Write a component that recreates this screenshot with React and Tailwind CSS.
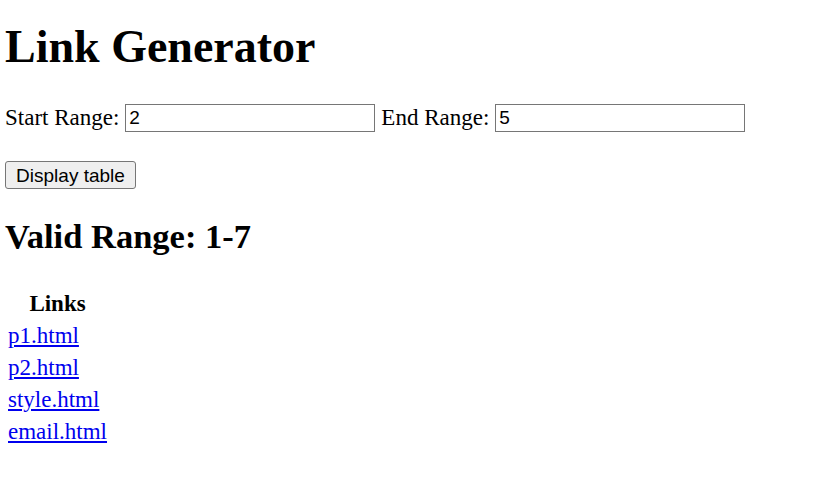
export default function App() {
  const links = ["p1.html", "p2.html", "style.html", "email.html"];

  return (
    <div className="min-h-[487px] bg-white px-[5px] pt-px font-['Liberation_Serif',serif] text-[23px] leading-[1.15] text-black">
      <h1 className="mt-[19px] text-[46px] font-bold leading-[53px]">Link Generator</h1>

      <div className="mt-[31px] flex items-center h-[28px]">
        <label>Start Range:</label>
        <input
          readOnly
          value="2"
          className="ml-[6px] h-[28px] w-[250px] border border-[#767676] px-[3px] font-['Liberation_Sans',sans-serif] text-[19px] outline-none"
        />
        <label className="ml-[6px]">End Range:</label>
        <input
          readOnly
          value="5"
          className="ml-[6px] h-[28px] w-[250px] border border-[#767676] px-[3px] font-['Liberation_Sans',sans-serif] text-[19px] outline-none"
        />
      </div>

      <button className="mt-[29px] h-[28px] w-[131px] rounded-[3px] border border-[#767676] bg-[#efefef] font-['Liberation_Sans',sans-serif] text-[19px] leading-none text-black">
        Display table
      </button>

      <h2 className="mt-[28px] text-[34.5px] font-bold leading-[39px]">Valid Range: 1-7</h2>

      <table className="mt-[30px] border-separate border-spacing-x-[2px] border-spacing-y-[3px]">
        <thead>
          <tr>
            <th className="px-px py-0 text-center font-bold leading-[29px]">Links</th>
          </tr>
        </thead>
        <tbody>
          {links.map((l) => (
            <tr key={l}>
              <td className="px-px py-0 leading-[29px]">
                <a href="#" className="text-[#0000ee] underline">
                  {l}
                </a>
              </td>
            </tr>
          ))}
        </tbody>
      </table>
    </div>
  );
}
